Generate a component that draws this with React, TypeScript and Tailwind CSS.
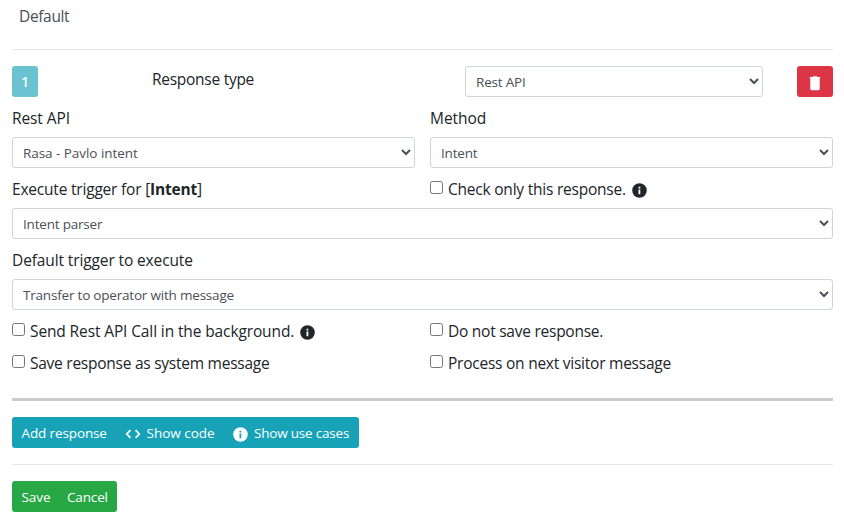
import type { ReactNode } from "react";

function InfoIcon({ className = "" }: { className?: string }) {
  return (
    <svg viewBox="0 0 15 15" className={`h-[15px] w-[15px] shrink-0 ${className}`}>
      <path
        fill="currentColor"
        fillRule="evenodd"
        d="M7.5 0.2a7.3 7.3 0 1 0 0 14.6a7.3 7.3 0 0 0 0-14.6zM6.5 3.7h1.8v1.7H6.5zM6.5 6.6h1.8v4.7H6.5z"
      />
    </svg>
  );
}

function TrashIcon() {
  return (
    <svg viewBox="0 0 12 15" className="h-[15px] w-3" fill="currentColor">
      <path d="M0.8 1h2.8L4.2 0.3h3.6L8.4 1h2.8v1.6h-0.5v10.2a1.5 1.5 0 0 1-1.5 1.5H2.8a1.5 1.5 0 0 1-1.5-1.5V2.6H0.8z" />
    </svg>
  );
}

function CodeIcon() {
  return (
    <svg viewBox="0 0 16 10" className="h-[10px] w-4" fill="none" stroke="currentColor" strokeWidth="1.8">
      <path d="M5.4 1.2L1.8 5l3.6 3.8M10.6 1.2L14.2 5l-3.6 3.8" />
    </svg>
  );
}

function Select({ value, className = "" }: { value: string; className?: string }) {
  return (
    <select
      className={`block h-[31px] rounded-[3px] border border-[#ced4da] bg-white py-1 pr-[7px] pl-[6px] text-[13.5px] text-[#495057] ${className}`}
    >
      <option>{value}</option>
    </select>
  );
}

function Check({ children, className }: { children: ReactNode; className: string }) {
  return (
    <label className={`flex h-6 items-start ${className}`}>
      <input type="checkbox" className="mt-[5px] mr-[5px] h-[13px] w-[13px] shrink-0" />
      {children}
    </label>
  );
}

export default function App() {
  return (
    <main className="h-[527px] w-[844px] overflow-hidden bg-white pr-[11px] pl-3 font-['Open_Sans','Noto_Sans',sans-serif] text-[15.5px] leading-[26px] text-[#212529]">
      <div className="h-[49px] pt-[3px] pl-[7px] tracking-[-0.35px] text-[#495057]">Default</div>
      <hr className="border-[#e5e5e5]" />

      <section className="mt-4 flex flex-col gap-2">
        <div className="flex h-[31px] items-start">
          <button className="h-[31px] w-[26px] rounded-[3px] bg-[#6ac3d0] text-[13.5px] font-semibold text-white">1</button>
          <div className="ml-[114px] w-[313px] tracking-[-0.27px]">Response type</div>
          <Select value="Rest API" className="w-[298px] tracking-[-0.2px]" />
          <button className="ml-auto flex h-[31px] w-9 items-center justify-center rounded-[3px] bg-[#dc3545] pt-1 text-white">
            <TrashIcon />
          </button>
        </div>

        <div className="grid grid-cols-2 gap-x-[15px] gap-y-2">
          <div className="h-6 tracking-[-0.1px]">Rest API</div>
          <div className="h-6 tracking-[-0.05px]">Method</div>
          <Select value="Rasa - Pavlo intent" className="w-full tracking-[-0.05px]" />
          <Select value="Intent" className="w-full tracking-[-0.2px]" />
          <div className="h-6 tracking-[-0.2px]">
            Execute trigger for [<b className="font-bold">Intent</b>]
          </div>
          <Check className="tracking-[-0.22px]">
            Check only this response.
            <InfoIcon className="mt-[7px] ml-[6px]" />
          </Check>
        </div>

        <Select value="Intent parser" className="w-full tracking-[-0.2px]" />
        <div className="h-6 tracking-[-0.12px]">Default trigger to execute</div>
        <Select value="Transfer to operator with message" className="w-full tracking-[-0.2px]" />

        <div className="grid grid-cols-2 gap-x-[15px] gap-y-2">
          <Check className="tracking-[-0.12px]">
            Send Rest API Call in the background.
            <InfoIcon className="mt-[7px] ml-[6px]" />
          </Check>
          <Check className="tracking-[-0.25px]">Do not save response.</Check>
          <Check className="tracking-[-0.25px]">Save response as system message</Check>
          <Check className="tracking-[-0.24px]">Process on next visitor message</Check>
        </div>
      </section>

      <hr className="mt-6 border-t-[3px] border-[#cccccc]" />

      <div className="mt-4 flex h-[31px] w-[347px] items-center rounded-[3px] bg-[#17a2b8] pl-[9.5px] text-[13.5px] text-white">
        <button className="w-[103px] text-left tracking-[-0.12px] whitespace-nowrap">Add response</button>
        <button className="flex w-[108.5px] items-center tracking-[0px] whitespace-nowrap">
          <span className="mt-[3px] mr-[6px]">
            <CodeIcon />
          </span>
          Show code
        </button>
        <button className="flex items-center tracking-[-0.2px] whitespace-nowrap">
          <InfoIcon className="mt-[3px] mr-[6px]" />
          Show use cases
        </button>
      </div>

      <hr className="mt-4 border-[#e5e5e5]" />

      <div className="mt-4 flex h-[31px] w-[105px] items-center rounded-[3px] bg-[#28a745] pl-[9.5px] text-[13.5px] text-white">
        <button className="w-[45.5px] text-left tracking-[-0.05px]">Save</button>
        <button className="tracking-[-0.15px]">Cancel</button>
      </div>
    </main>
  );
}
